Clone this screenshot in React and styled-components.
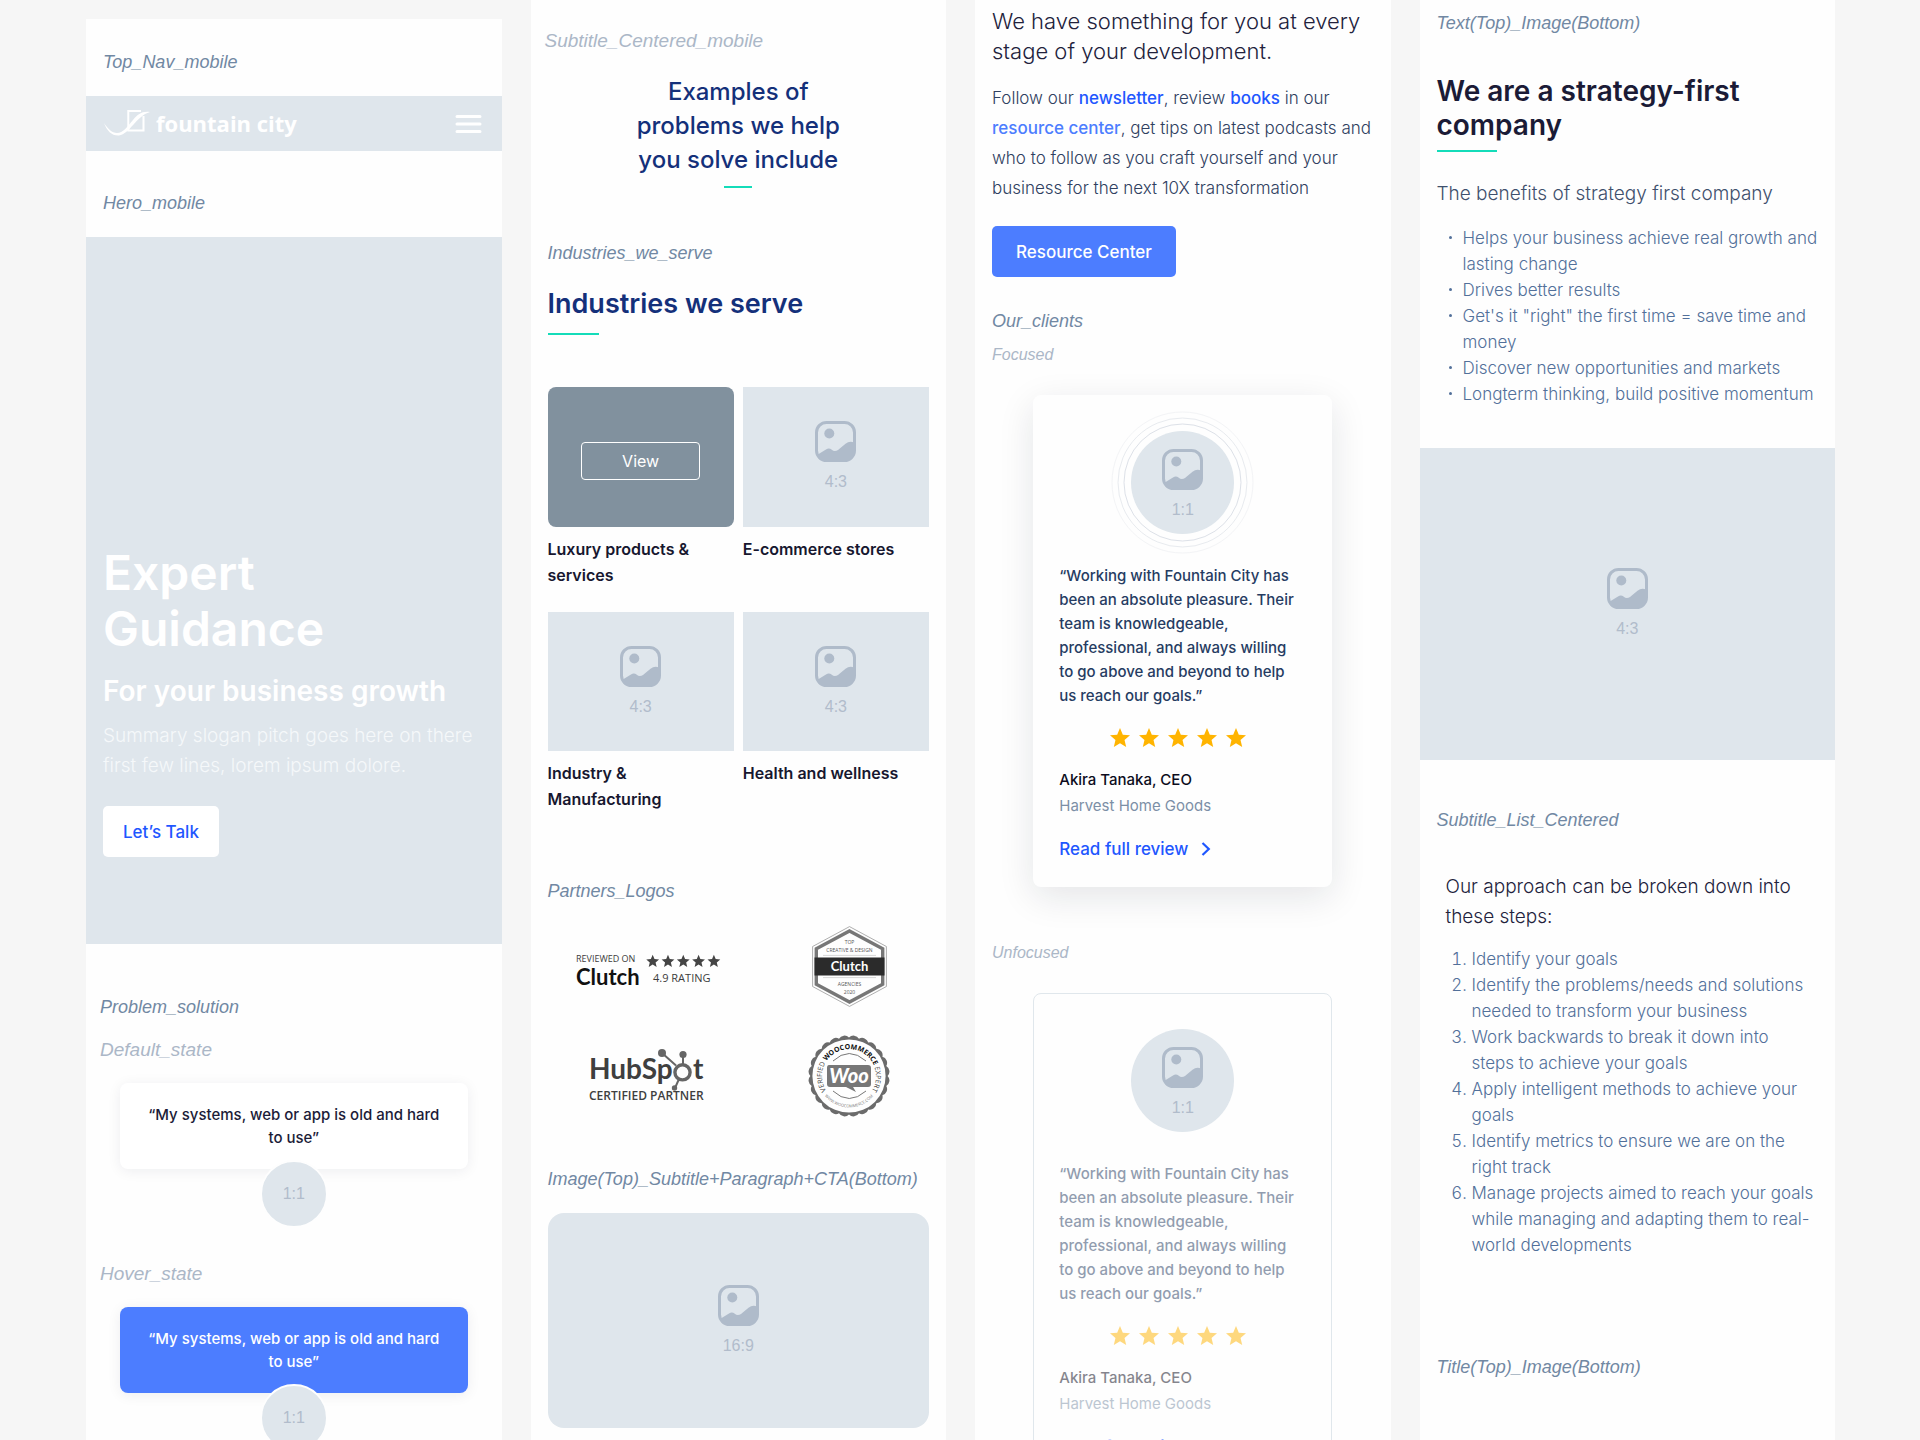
import React from "react";
import styled, { createGlobalStyle } from "styled-components";

const GlobalStyle = createGlobalStyle`
  * {
    box-sizing: border-box;
  }
  body {
    margin: 0;
    background: #f6f6f6;
    font-family: "Inter", "Liberation Sans", sans-serif;
  }
  p, h1, h2, h3, ul, ol, figure, blockquote {
    margin: 0;
    padding: 0;
  }
  button {
    font-family: inherit;
    cursor: pointer;
  }
  a {
    text-decoration: none;
  }
`

const Board = styled.main`
  height: 100vh;
  overflow: hidden;
  display: grid;
  grid-template-columns: repeat(4, minmax(0, 1fr));
  gap: 29px;
  padding: 0 85px 0 86px;
`

const Column = styled.div`
  background: #fefefe;
  margin-top: ${(props) => props.$top || 0}px;
  padding-top: ${(props) => props.$pad || 0}px;
  padding-bottom: 40px;
`

const Section = styled.section`
  display: flex;
  flex-direction: column;
  align-items: stretch;
  margin-top: ${(props) => props.$gap || 0}px;
  padding: 0 ${(props) => (props.$bleed ? 0 : 17)}px;
`

const Label = styled.p`
  color: #7188a3;
  font-family: "Liberation Sans", Arial, sans-serif;
  font-style: italic;
  font-size: 18px;
  line-height: 24px;
  padding: 0 ${(props) => props.$inset || 0}px;
`

const StateLabel = styled(Label)`
  color: #abb7c7;
  font-size: ${(props) => (props.$small ? 16 : 19)}px;
  line-height: ${(props) => (props.$small ? 20 : 24)}px;
  margin-top: ${(props) => props.$gap || 0}px;
`

/* top nav + hero */

const Nav = styled.nav`
  display: flex;
  align-items: center;
  justify-content: space-between;
  height: 55px;
  margin-top: 22px;
  padding: 0 20px 0 18px;
  background: #dfe6ec;
`

const Brand = styled.a`
  display: flex;
  align-items: center;
  gap: 6px;
  padding-bottom: 2px;
  color: #fff;
  font-family: "Open Sans", sans-serif;
  font-size: 22px;
  line-height: 28px;
  font-weight: 700;
`

const MenuButton = styled.button`
  display: flex;
  border: 0;
  padding: 0;
  background: none;
`

const Hero = styled.div`
  display: flex;
  flex-direction: column;
  justify-content: flex-end;
  align-items: flex-start;
  min-height: 707px;
  margin-top: 22px;
  padding: 0 17px 87px;
  background: #dfe6ec;
  color: #fff;
  h1 {
    max-width: 300px;
    font-size: 48px;
    line-height: 56px;
    font-weight: 600;
  }
  h2 {
    margin-top: 17px;
    font-size: 28px;
    line-height: 34px;
    font-weight: 600;
  }
  p {
    margin-top: 13px;
    color: #f5f8fa;
    font-size: 19px;
    line-height: 30px;
    font-weight: 300;
  }
`

const Button = styled.button`
  align-self: flex-start;
  height: 51px;
  margin-top: ${(props) => props.$gap}px;
  padding: 0 ${(props) => (props.$solid ? 24 : 20)}px;
  border: 0;
  border-radius: 5px;
  background: ${(props) => (props.$solid ? "#4c7dff" : "#fff")};
  color: ${(props) => (props.$solid ? "#fff" : "#1f57ff")};
  font-size: 17px;
  font-weight: 500;
`

/* problem cards */

const Problem = styled.figure`
  display: flex;
  flex-direction: column;
  align-items: center;
  padding: 0 34px;
  margin-top: 21px;
  blockquote {
    width: 100%;
    min-height: 86px;
    padding: 20px 22px;
    border-radius: 8px;
    background: ${(props) => (props.$hover ? "#4c7dff" : "#fff")};
    color: ${(props) => (props.$hover ? "#fff" : "#1c1c38")};
    box-shadow: 0 2px 14px rgba(20, 30, 50, 0.07);
    font-size: 15px;
    line-height: 23px;
    font-weight: 500;
    text-align: center;
  }
`

const Dot = styled.span`
  display: flex;
  align-items: center;
  justify-content: center;
  width: 68px;
  height: 68px;
  margin-top: -9px;
  border: 2px solid #fefefe;
  border-radius: 50%;
  background: #dfe6ec;
  color: #b1bccb;
  font-family: "Liberation Sans", Arial, sans-serif;
  font-size: 16px;
`

/* headings */

const Heading = styled.h2`
  margin-top: ${(props) => props.$gap}px;
  color: ${(props) => (props.$dark ? "#1b1b36" : "#14307a")};
  font-size: ${(props) => props.$size}px;
  line-height: 34px;
  font-weight: ${(props) => (props.$center ? 500 : 600)};
  text-align: ${(props) => (props.$center ? "center" : "left")};
`

const CenteredHeading = styled(Heading)`
  align-self: center;
  max-width: 230px;
`

const Rule = styled.span`
  display: block;
  width: ${(props) => props.$width}px;
  height: 2px;
  margin-top: ${(props) => props.$gap}px;
  align-self: ${(props) => (props.$center ? "center" : "flex-start")};
  background: #14dcb9;
`

const Lead = styled.p`
  margin-top: ${(props) => props.$gap || 0}px;
  color: ${(props) => props.$color || "#22223c"};
  font-size: ${(props) => props.$size || 19}px;
  line-height: 30px;
  font-weight: 300;
`

/* placeholders */

const Box = styled.div`
  display: flex;
  flex-direction: column;
  align-items: center;
  justify-content: center;
  gap: 10px;
  aspect-ratio: ${(props) => props.$ratio};
  width: ${(props) => (props.$width ? `${props.$width}px` : "100%")};
  margin-top: ${(props) => props.$gap || 0}px;
  padding-top: ${(props) => props.$drop || 0}px;
  border-radius: ${(props) => props.$radius || 0};
  background: ${(props) => (props.$dark ? "#81919e" : "#dfe6ec")};
  color: #b1bccb;
  font-family: "Liberation Sans", Arial, sans-serif;
  font-size: 16px;
  line-height: 20px;
`

const Tiles = styled.div`
  display: grid;
  grid-template-columns: 1fr 1fr;
  gap: 24px 9px;
  margin-top: 52px;
`

const TileTitle = styled.h3`
  margin-top: 9px;
  max-width: 160px;
  color: #17172f;
  font-size: 16px;
  line-height: 26px;
  font-weight: 600;
`

const ViewButton = styled.button`
  width: 119px;
  height: 38px;
  border: 1px solid #fff;
  border-radius: 4px;
  background: none;
  color: #fff;
  font-family: "Inter", sans-serif;
  font-size: 16px;
`

const Logos = styled.div`
  display: grid;
  grid-template-columns: 1fr 1fr;
  place-items: center;
  gap: 28px 6px;
  margin-top: 23px;
  padding-left: 22px;
  svg {
    display: block;
  }
`

/* resources */

const Copy = styled.p`
  margin-top: 17px;
  margin-right: -8px;
  color: #2f4060;
  font-size: 17px;
  line-height: 30px;
  font-weight: 300;
  a {
    color: #1f57ff;
    font-weight: 500;
  }
  a.visited {
    color: #4c7dff;
  }
`

/* reviews */

const Review = styled.article`
  display: flex;
  flex-direction: column;
  width: 299px;
  max-width: 100%;
  align-self: center;
  margin-top: 30px;
  padding: ${(props) => (props.$focused ? "36px 26px 25px" : "35px 25px 24px")};
  border: ${(props) => (props.$focused ? 0 : "1px solid #e0e7ec")};
  border-radius: 8px;
  background: #fefefe;
  box-shadow: ${(props) => (props.$focused ? "0 10px 36px rgba(20, 30, 50, 0.11)" : "none")};
`

const Portrait = styled.div`
  position: relative;
  align-self: center;
  svg.rings {
    position: absolute;
    top: -20px;
    left: -20px;
  }
`

const ReviewBody = styled.div`
  display: flex;
  flex-direction: column;
  margin-top: 30px;
  opacity: ${(props) => (props.$focused ? 1 : 0.5)};
  blockquote {
    max-width: 240px;
    color: #263c62;
    font-size: 15px;
    line-height: 24px;
    font-weight: 500;
  }
`

const Stars = styled.div`
  display: flex;
  justify-content: center;
  gap: 5px;
  margin-top: 18px;
  padding-right: 10px;
`

const Person = styled.p`
  margin-top: 17px;
  color: #0c0c1c;
  font-size: 15px;
  line-height: 26px;
  font-weight: 500;
  span {
    display: block;
    color: #7c8fa6;
    font-weight: 400;
  }
`

const ReadMore = styled.a`
  display: flex;
  align-items: center;
  gap: 12px;
  margin-top: 17px;
  color: #1f57ff;
  font-size: 17px;
  line-height: 26px;
  font-weight: 500;
`

/* lists */

const Bullets = styled.ul`
  margin: 16px -8px 0 26px;
  color: #52709a;
  font-size: 17px;
  line-height: 26px;
  font-weight: 300;
  list-style: none;
  li::before {
    content: "";
    display: inline-block;
    width: 3px;
    height: 3px;
    margin: 0 11px 3px -14px;
    border-radius: 50%;
    background: #52709a;
    vertical-align: middle;
  }
`

const Steps = styled.ol`
  margin: 14px 3px 0 26px;
  color: #52709a;
  font-size: 17px;
  line-height: 26px;
  font-weight: 300;
`

const Approach = styled.div`
  margin-top: 40px;
  padding-left: 9px;
`

const LogoMark = () => (
  <svg width="46" height="30" viewBox="0 0 46 30" aria-hidden="true">
    <path d="M33 3H24.3V22.5H39.5V8" fill="none" stroke="#fff" strokeWidth="2" />
    <path d="M24 3H37" stroke="#fff" strokeWidth="2" />
    <path d="M0 15C3 23 8 28 15 27.5C26 26 32 8 46 4C38 3 34 6 29 12C23 19 19 25 13 25C8 25 4 21 0 15Z" fill="#fff" />
  </svg>
)

const MenuIcon = () => (
  <svg width="27" height="20" viewBox="0 0 27 20" aria-hidden="true">
    <path d="M2 2.5H25M2 10H25M2 17.5H25" stroke="#fff" strokeWidth="3" strokeLinecap="round" />
  </svg>
)

const ImageIcon = () => (
  <svg width="41" height="41" viewBox="0 0 41 41" aria-hidden="true">
    <rect x="1.5" y="1.5" width="38" height="38" rx="10" fill="none" stroke="#afbbca" strokeWidth="3" />
    <circle cx="14.3" cy="12.5" r="5" fill="#afbbca" />
    <path d="M2 34L11 28.4Q14 26.5 16.5 28.5Q19.5 31.3 23 29L30.5 22.8Q35 19.3 39.5 22V30Q39.5 39.5 30 39.5H11Q3 39.5 2 34Z" fill="#afbbca" />
  </svg>
)

const STAR = "M12 17.27L18.18 21l-1.64-7.03L22 9.24l-7.19-.61L12 2 9.19 8.63 2 9.24l5.46 4.73L5.82 21z"

const Star = () => (
  <svg width="24" height="24" viewBox="0 0 24 24" aria-hidden="true">
    <path d={STAR} fill="#ffb400" />
  </svg>
)

const Rings = () => (
  <svg className="rings" width="143" height="143" viewBox="0 0 143 143" fill="none" aria-hidden="true">
    <circle cx="71.5" cy="71.5" r="58.5" stroke="#dde1e8" />
    <circle cx="71.5" cy="71.5" r="64.5" stroke="#e8ebef" />
    <circle cx="71.5" cy="71.5" r="70.5" stroke="#f3f4f6" />
  </svg>
)

const ClutchReviews = () => (
  <svg width="146" height="48" viewBox="0 -12 146 48">
    <text x="0" y="7" fontFamily="Open Sans" fontSize="9" fill="#3c3c3c">REVIEWED ON</text>
    <text x="0" y="30" fontFamily="Lato" fontWeight="700" fontSize="22" fill="#111">Clutch</text>
    {[0, 1, 2, 3, 4].map((n) => (
      <path key={n} d={STAR} fill="#444" transform={`translate(${69 + n * 15.3} -1.5) scale(0.64)`} />
    ))}
    <text x="77" y="27" fontFamily="Open Sans" fontSize="11" fill="#3c3c3c">4.9 RATING</text>
  </svg>
)

const ClutchBadge = () => (
  <svg width="75" height="81" viewBox="0 0 75 81" textAnchor="middle" fontFamily="Open Sans" fill="#555">
    <path d="M37.5 .6L74.4 20.5V60.5L37.5 80.4L.6 60.5V20.5Z" fill="none" stroke="#999" strokeWidth=".8" />
    <path d="M37.5 5L70.7 22.8V58.2L37.5 76L4.3 58.2V22.8Z" fill="none" stroke="#777" strokeWidth="3.4" />
    <rect x="2.5" y="31.5" width="70" height="18" fill="#2b2b2b" />
    <path d="M11 29.4H64M11 51.6H64" stroke="#bbb" strokeWidth=".6" />
    <text x="37.5" y="17.5" fontSize="5">TOP</text>
    <text x="37.5" y="26" fontSize="5">CREATIVE &amp; DESIGN</text>
    <text x="37.5" y="45" fontFamily="Lato" fontWeight="700" fontSize="13" fill="#fff">Clutch</text>
    <text x="37.5" y="59.5" fontSize="5">AGENCIES</text>
    <text x="37.5" y="67.5" fontSize="5">2020</text>
  </svg>
)

const HubSpot = () => (
  <svg width="120" height="54" viewBox="0 0 120 54" fill="#3f3f3f">
    <text x="0" y="30" fontFamily="Lato" fontWeight="700" fontSize="28">HubSp</text>
    <text x="104" y="30" fontFamily="Lato" fontWeight="700" fontSize="28">t</text>
    <g stroke="#666" fill="none">
      <circle cx="93.5" cy="23.3" r="7.6" strokeWidth="3.4" />
      <path d="M73 4L87 16.5M94 6V16M86 39L90 30" strokeWidth="2" />
    </g>
    <g fill="#666">
      <circle cx="73" cy="4" r="4" />
      <circle cx="94" cy="5.5" r="3.6" />
      <circle cx="85.5" cy="39" r="2.7" />
    </g>
    <text x="0" y="51" fontFamily="Open Sans" fontWeight="600" fontSize="12">CERTIFIED PARTNER</text>
  </svg>
)

// ring edge with 24 shallow scallops
const scallops = () => {
  const points = []
  for (let n = 0; n <= 24; n++) {
    const a = (n / 24) * Math.PI * 2
    const x = (41 + 38.6 * Math.cos(a)).toFixed(2)
    const y = (41 + 38.6 * Math.sin(a)).toFixed(2)
    points.push(n === 0 ? `M${x} ${y}` : `A6.4 6.4 0 0 1 ${x} ${y}`)
  }
  return points.join("") + "Z"
}

const WooBadge = () => (
  <svg width="82" height="82" viewBox="0 0 82 82">
    <path d={scallops()} fill="#6b6b6b" />
    <circle cx="41" cy="41" r="36.6" fill="#fefefe" />
    <path id="woo-top" d="M20.3 58.4A27 27 0 1 1 61.7 58.4" fill="none" />
    <path id="woo-bottom" d="M12 53A31.4 31.4 0 0 0 70 53" fill="none" />
    <text fontFamily="Open Sans" fontSize="7" fill="#444" textAnchor="middle">
      <textPath href="#woo-top" startOffset="50%">
        VERIFIED <tspan fontWeight="700" fill="#111">WOOCOMMERCE</tspan> EXPERT
      </textPath>
    </text>
    <text fontFamily="Open Sans" fontSize="4" fill="#777" textAnchor="middle">
      <textPath href="#woo-bottom" startOffset="50%">WWW.WOOCOMMERCE.COM</textPath>
    </text>
    <path d="M25 26Q41 11 58 26M25 56Q41 71 58 56" fill="none" stroke="#777" strokeWidth="1" />
    <path d="M21 30H60Q63 30 63 33V49Q63 52 60 52H45L48 57L38 52H22Q19 52 19 49V33Q19 30 21 30Z" fill="#777" />
    <text x="41" y="48" fontFamily="Lato" fontWeight="900" fontStyle="italic" fontSize="20" fill="#fff" textAnchor="middle">Woo</text>
  </svg>
)

const Chevron = () => (
  <svg width="12" height="16" viewBox="0 0 12 16" aria-hidden="true">
    <path d="M2.5 2L8.8 8L2.5 14" fill="none" stroke="#1f57ff" strokeWidth="2.2" />
  </svg>
)

const Placeholder = ({ text, ...rest }) => (
  <Box {...rest}>
    <ImageIcon />
    <span>{text}</span>
  </Box>
)

const ProblemCard = ({ hover }) => (
  <Problem $hover={hover}>
    <blockquote>“My systems, web or app is old and hard to use”</blockquote>
    <Dot>1:1</Dot>
  </Problem>
)

const ReviewCard = ({ focused }) => (
  <Review $focused={focused}>
    <Portrait>
      {focused && <Rings />}
      <Placeholder text="1:1" $ratio="1" $width={103} $radius="50%" $drop={4} />
    </Portrait>
    <ReviewBody $focused={focused}>
      <blockquote>
        “Working with Fountain City has been an absolute pleasure. Their team is knowledgeable,
        professional, and always willing to go above and beyond to help us reach our goals.”
      </blockquote>
      <Stars role="img" aria-label="5 out of 5">
        {[1, 2, 3, 4, 5].map((n) => <Star key={n} />)}
      </Stars>
      <Person>
        Akira Tanaka, CEO
        <span>Harvest Home Goods</span>
      </Person>
      <ReadMore href="#review">Read full review <Chevron /></ReadMore>
    </ReviewBody>
  </Review>
)

const industries = [
  { title: "Luxury products & services", view: true },
  { title: "E-commerce stores" },
  { title: "Industry & Manufacturing" },
  { title: "Health and wellness" },
]

const benefits = [
  "Helps your business achieve real growth and lasting change",
  "Drives better results",
  "Get's it \"right\" the first time = save time and money",
  "Discover new opportunities and markets",
  "Longterm thinking, build positive momentum",
]

const steps = [
  "Identify your goals",
  "Identify the problems/needs and solutions needed to transform your business",
  "Work backwards to break it down into steps to achieve your goals",
  "Apply intelligent methods to achieve your goals",
  "Identify metrics to ensure we are on the right track",
  "Manage projects aimed to reach your goals while managing and adapting them to real-world developments",
]

const App = () => {
  return (
    <>
      <GlobalStyle />
      <Board>
        <Column $top={19} $pad={31}>
          <Section $bleed>
            <Label $inset={17}>Top_Nav_mobile</Label>
            <Nav>
              <Brand href="#home"><LogoMark />fountain city</Brand>
              <MenuButton aria-label="Menu"><MenuIcon /></MenuButton>
            </Nav>
          </Section>
          <Section $bleed $gap={40}>
            <Label $inset={17}>Hero_mobile</Label>
            <Hero>
              <h1>Expert Guidance</h1>
              <h2>For your business growth</h2>
              <p>Summary slogan pitch goes here on there first few lines, lorem ipsum dolore.</p>
              <Button $gap={25}>Let’s Talk</Button>
            </Hero>
          </Section>
          <Section $bleed $gap={51}>
            <Label $inset={14}>Problem_solution</Label>
            <StateLabel $inset={14} $gap={19}>Default_state</StateLabel>
            <ProblemCard />
            <StateLabel $inset={14} $gap={34}>Hover_state</StateLabel>
            <ProblemCard hover />
          </Section>
        </Column>

        <Column $pad={29}>
          <Section $bleed>
            <StateLabel $inset={14}>Subtitle_Centered_mobile</StateLabel>
            <CenteredHeading $center $gap={22} $size={24}>Examples of problems we help you solve include</CenteredHeading>
            <Rule $center $width={28} $gap={9} />
          </Section>
          <Section $gap={53}>
            <Label>Industries_we_serve</Label>
            <Heading $gap={22} $size={27}>Industries we serve</Heading>
            <Rule $width={51} $gap={12} />
            <Tiles>
              {industries.map((item) => (
                <div key={item.title}>
                  {item.view
                    ? <Box $dark $ratio="4 / 3" $radius="8px" $drop={8}><ViewButton>View</ViewButton></Box>
                    : <Placeholder text="4:3" $ratio="4 / 3" />}
                  <TileTitle>{item.title}</TileTitle>
                </div>
              ))}
            </Tiles>
          </Section>
          <Section $gap={67} $bleed>
            <Label $inset={17}>Partners_Logos</Label>
            <Logos>
              <ClutchReviews />
              <ClutchBadge />
              <HubSpot />
              <WooBadge />
            </Logos>
          </Section>
          <Section $gap={50}>
            <Label>Image(Top)_Subtitle+Paragraph+CTA(Bottom)</Label>
            <Placeholder text="16:9" $ratio="16 / 9" $radius="16px" $gap={22} />
          </Section>
        </Column>

        <Column $pad={6}>
          <Section>
            <Lead $size={22}>We have something for you at every stage of your development.</Lead>
            <Copy>
              Follow our <a href="#newsletter">newsletter</a>, review <a href="#books">books</a> in our{" "}
              <a href="#resources" className="visited">resource center</a>, get tips on latest podcasts and
              who to follow as you craft yourself and your business for the next 10X transformation
            </Copy>
            <Button $solid $gap={23}>Resource Center</Button>
          </Section>
          <Section $gap={32}>
            <Label>Our_clients</Label>
            <StateLabel $small $gap={12}>Focused</StateLabel>
            <ReviewCard focused />
            <StateLabel $small $gap={56}>Unfocused</StateLabel>
            <ReviewCard />
          </Section>
        </Column>

        <Column $pad={11}>
          <Section>
            <Label>Text(Top)_Image(Bottom)</Label>
            <Heading $dark $gap={39} $size={28}>We are a strategy-first company</Heading>
            <Rule $width={60} $gap={8} />
            <Lead $gap={27} $color="#3f506d">The benefits of strategy first company</Lead>
            <Bullets>
              {benefits.map((text) => <li key={text}>{text}</li>)}
            </Bullets>
          </Section>
          <Placeholder text="4:3" $ratio="4 / 3" $gap={41} />
          <Section $gap={48}>
            <Label>Subtitle_List_Centered</Label>
            <Approach>
              <Lead>Our approach can be broken down into these steps:</Lead>
              <Steps>
                {steps.map((text) => <li key={text}>{text}</li>)}
              </Steps>
            </Approach>
          </Section>
          <Section $gap={97}>
            <Label>Title(Top)_Image(Bottom)</Label>
          </Section>
        </Column>
      </Board>
    </>
  )
}

export default App
